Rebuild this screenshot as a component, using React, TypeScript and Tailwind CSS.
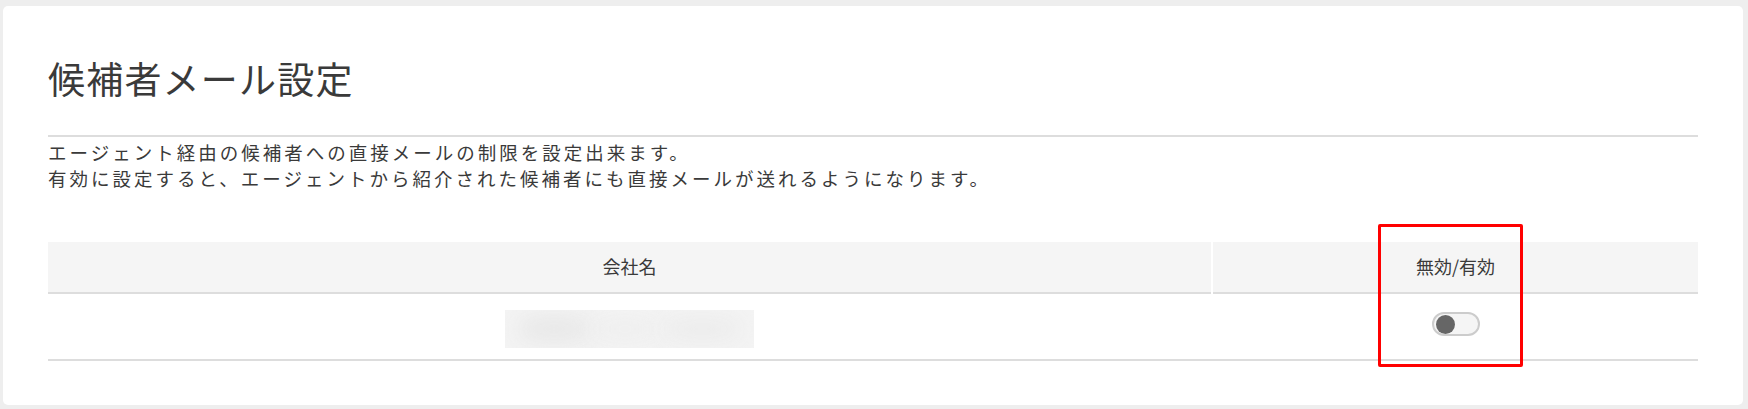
import React from 'react';

const font = { fontFamily: '"Noto Sans CJK JP", "Noto Sans", sans-serif' };

function Toggle() {
  return (
    <div className="w-[48px] h-[24px] rounded-full border-2 border-[#cccccc] bg-[#f5f5f5] flex items-center px-[2px]">
      <div className="w-[19px] h-[19px] rounded-full bg-[#666666]" />
    </div>
  );
}

function BlurredName() {
  // company name is masked in the screenshot
  return (
    <div className="relative w-[249px] h-[38px] bg-[#f4f4f4] overflow-hidden">
      <div className="absolute left-[14px] top-[10px] w-[70px] h-[18px] rounded-full bg-[#e2e2e2] blur-md" />
      <div className="absolute left-[90px] top-[12px] w-[60px] h-[14px] rounded-full bg-[#ebebeb] blur-md" />
      <div className="absolute left-[160px] top-[11px] w-[75px] h-[16px] rounded-full bg-[#e8e8e8] blur-md" />
    </div>
  );
}

export default function App() {
  return (
    <div className="min-h-[409px] bg-[#eeeeee] pl-[3px] pr-[5px] pt-[6px] pb-[4px]" style={font}>
      <div className="relative bg-white rounded-[5px] px-[45px] pt-[45px] pb-[44px] text-[#3a3a3a]">
        <h1 className="text-[37px] leading-[54px] tracking-[1.2px] font-normal">候補者メール設定</h1>

        <div className="mt-[30px] border-t-2 border-[#dddddd]" />

        <div className="mt-[2px] text-[18.5px] leading-[26px] tracking-[3px]">
          <p>エージェント経由の候補者への直接メールの制限を設定出来ます。</p>
          <p>有効に設定すると、エージェントから紹介された候補者にも直接メールが送れるようになります。</p>
        </div>

        <div className="mt-[51px] text-[18px]">
          <div className="flex bg-[#f5f5f5]">
            <div className="w-[1163px] h-[52px] flex items-center justify-center border-b-2 border-[#dddddd]">
              <span className="pb-[2px]">会社名</span>
            </div>
            <div className="w-[2px] bg-white" />
            <div className="flex-1 h-[52px] flex items-center justify-center border-b-2 border-[#dddddd]">
              <span className="pb-[2px]">無効/有効</span>
            </div>
          </div>
          <div className="flex h-[67px] border-b-2 border-[#dddddd]">
            <div className="w-[1163px] flex justify-center pt-[16px]">
              <BlurredName />
            </div>
            <div className="w-[2px]" />
            <div className="flex-1 flex justify-center pt-[18px]">
              <Toggle />
            </div>
          </div>
        </div>

        <div className="absolute left-[1375px] top-[218px] w-[145px] h-[143px] border-[3px] border-[#ff0000] rounded-[2px] pointer-events-none" />
      </div>
    </div>
  );
}
